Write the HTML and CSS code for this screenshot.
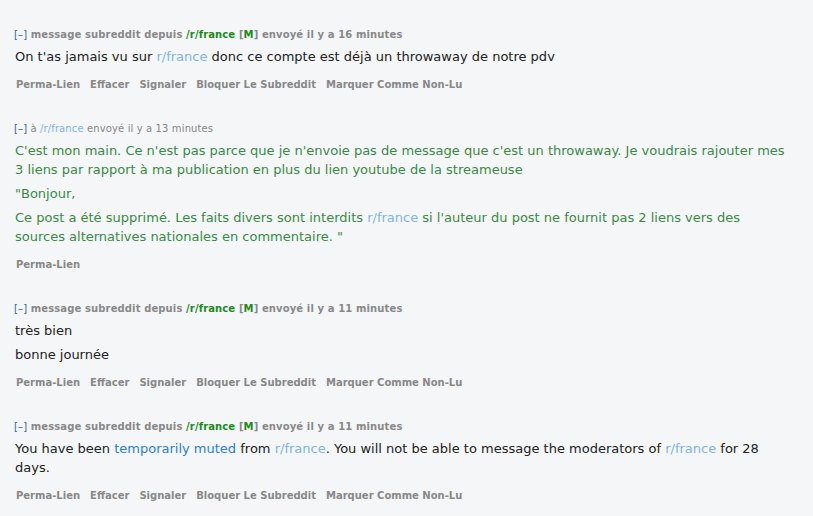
FILE: index.html
```html
<!DOCTYPE html>
<html>
<head>
<meta charset="utf-8">
<link rel="stylesheet" href="styles.css">
</head>
<body>
<div class="list">
  <div class="msg">
    <div class="tagline"><span class="exp">[–]</span> message subreddit depuis <span class="sub">/r/france</span> <span class="br">[</span><span class="mod">M</span><span class="br">]</span> envoyé il y a 16 minutes</div>
    <div class="md">
      <p>On t'as jamais vu sur <a class="lk">r/france</a> donc ce compte est déjà un throwaway de notre pdv</p>
    </div>
    <ul class="buttons"><li>Perma-Lien</li><li>Effacer</li><li>Signaler</li><li>Bloquer Le Subreddit</li><li>Marquer Comme Non-Lu</li></ul>
  </div>

  <div class="msg">
    <div class="tagline light"><span class="exp">[–]</span> à <span class="lk">/r/france</span> envoyé il y a 13 minutes</div>
    <div class="md green">
      <p>C'est mon main. Ce n'est pas parce que je n'envoie pas de message que c'est un throwaway. Je voudrais rajouter mes 3 liens par rapport à ma publication en plus du lien youtube de la streameuse</p>
      <p>"Bonjour,</p>
      <p>Ce post a été supprimé. Les faits divers sont interdits <a class="lk">r/france</a> si l'auteur du post ne fournit pas 2 liens vers des sources alternatives nationales en commentaire. "</p>
    </div>
    <ul class="buttons"><li>Perma-Lien</li></ul>
  </div>

  <div class="msg">
    <div class="tagline"><span class="exp">[–]</span> message subreddit depuis <span class="sub">/r/france</span> <span class="br">[</span><span class="mod">M</span><span class="br">]</span> envoyé il y a 11 minutes</div>
    <div class="md">
      <p>très bien</p>
      <p>bonne journée</p>
    </div>
    <ul class="buttons"><li>Perma-Lien</li><li>Effacer</li><li>Signaler</li><li>Bloquer Le Subreddit</li><li>Marquer Comme Non-Lu</li></ul>
  </div>

  <div class="msg">
    <div class="tagline"><span class="exp">[–]</span> message subreddit depuis <span class="sub">/r/france</span> <span class="br">[</span><span class="mod">M</span><span class="br">]</span> envoyé il y a 11 minutes</div>
    <div class="md">
      <p>You have been <a class="blue">temporarily muted</a> from <a class="lk">r/france</a>. You will not be able to message the moderators of <a class="lk">r/france</a> for 28 days.</p>
    </div>
    <ul class="buttons"><li>Perma-Lien</li><li>Effacer</li><li>Signaler</li><li>Bloquer Le Subreddit</li><li>Marquer Comme Non-Lu</li></ul>
  </div>
</div>
</body>
</html>
```
FILE: styles.css
```css
html, body {
  margin: 0;
  background: #f5f6f8;
}
body {
  font-family: "DejaVu Sans", Verdana, sans-serif;
  color: #222;
}
.list {
  padding: 28px 20px 0 15px;
}
.msg {
  margin-bottom: 30px;
}
.tagline {
  font-size: 10px;
  line-height: 14px;
  font-weight: bold;
  color: #888;
  margin-left: -1px;
  letter-spacing: 0.12px;
}
.tagline.light {
  font-weight: normal;
}
.exp {
  color: #369;
  font-weight: normal;
}
.sub, .mod {
  color: #228822;
}
.br {
  color: #888;
}
.md {
  margin-top: 4.5px;
  font-size: 13px;
  line-height: 19px;
}
.md p {
  margin: 0 0 5px;
}
.md p:last-child {
  margin-bottom: 0;
}
.md.green {
  color: #3a8a46;
}
.lk {
  color: #80b4e6;
}
.blue {
  color: #2b7fd3;
}
.buttons {
  list-style: none;
  margin: 12.5px 0 0;
  padding: 0;
  display: flex;
  gap: 9px;
  font-size: 10px;
  line-height: 14px;
  font-weight: bold;
  color: #888;
}
.buttons li {
  padding-left: 1px;
}
```
